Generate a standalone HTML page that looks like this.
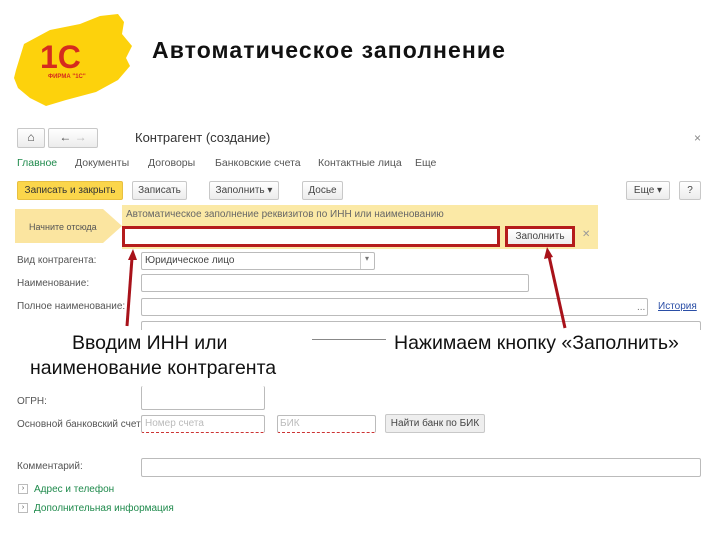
<!DOCTYPE html>
<html><head><meta charset="utf-8"><style>
*{margin:0;padding:0;box-sizing:border-box}
body{width:720px;height:540px;background:#fff;position:relative;overflow:hidden;font-family:"Liberation Sans",sans-serif;color:#444}
.a{position:absolute;white-space:nowrap}
.s{font-size:10px;color:#555}
.inp{position:absolute;border:1px solid #bbb;background:#fff;border-radius:2px}
.btn{position:absolute;border:1px solid #c8c8c8;border-radius:2px;background:linear-gradient(#fff,#ececec);font-size:10px;color:#444;text-align:center;line-height:17px}
.tab{position:absolute;top:157px;font-size:10.5px;color:#555}
.big{font-size:19.5px;color:#111}
</style></head><body>
<svg class="a" style="left:0;top:0" width="150" height="115">
<path d="M16 70 L24 44 L50 30 L80 24 L100 16 L118 14 L124 22 L122 34 L132 46 L126 58 L130 66 L118 80 L96 92 L66 100 L46 106 L30 98 L18 88 L14 78 Z" fill="#fdd20c"/>
<text x="40" y="68" font-family="Liberation Sans" font-weight="bold" font-size="32" fill="#d52b1e">1С</text>
<text x="48" y="78" font-family="Liberation Sans" font-weight="bold" font-size="6" fill="#d52b1e">ФИРМА "1С"</text>
</svg>
<div class="a" style="left:152px;top:37px;font-size:23px;font-weight:bold;color:#111;letter-spacing:1.1px">Автоматическое заполнение</div>

<div class="btn" style="left:17px;top:128px;width:28px;height:20px;font-size:12px">⌂</div>
<div class="btn" style="left:48px;top:128px;width:50px;height:20px;font-size:12px">← <span style="color:#bbb">→</span></div>
<div class="a" style="left:135px;top:130px;font-size:13px;color:#333">Контрагент (создание)</div>
<div class="a" style="left:694px;top:131px;font-size:12px;color:#888">×</div>

<div class="tab" style="left:17px;color:#1f8a4c">Главное</div>
<div class="tab" style="left:75px">Документы</div>
<div class="tab" style="left:148px">Договоры</div>
<div class="tab" style="left:215px">Банковские счета</div>
<div class="tab" style="left:318px">Контактные лица</div>
<div class="tab" style="left:415px">Еще</div>

<div class="btn" style="left:17px;top:181px;width:106px;height:19px;background:#fbd64b;border-color:#e8c040;color:#333">Записать и закрыть</div>
<div class="btn" style="left:132px;top:181px;width:55px;height:19px">Записать</div>
<div class="btn" style="left:209px;top:181px;width:70px;height:19px">Заполнить ▾</div>
<div class="btn" style="left:302px;top:181px;width:41px;height:19px">Досье</div>
<div class="btn" style="left:626px;top:181px;width:44px;height:19px">Еще ▾</div>
<div class="btn" style="left:679px;top:181px;width:22px;height:19px">?</div>

<div class="a" style="left:122px;top:205px;width:476px;height:44px;background:#fbe9a6"></div>
<div class="a s" style="left:126px;top:209px;color:#666">Автоматическое заполнение реквизитов по ИНН или наименованию</div>
<svg class="a" style="left:15px;top:209px" width="108" height="35"><path d="M0 0 H88 L107 17 L88 34 H0 Z" fill="#fbe5a0"/><text x="14" y="21" font-size="9" font-family="Liberation Sans" fill="#555">Начните отсюда</text></svg>
<div class="a" style="left:122px;top:226px;width:378px;height:21px;border:3px solid #b51c1c;background:#fff"></div>
<div class="a" style="left:505px;top:226px;width:70px;height:21px;border:3px solid #b51c1c;background:linear-gradient(#fff,#eee);font-size:10px;text-align:center;line-height:15px;color:#444">Заполнить</div>
<div class="a" style="left:582px;top:229px;font-size:10px;color:#999">✕</div>

<div class="a s" style="left:17px;top:255px">Вид контрагента:</div>
<div class="inp" style="left:141px;top:252px;width:234px;height:18px"></div>
<div class="a" style="left:360px;top:253px;width:1px;height:16px;background:#ccc"></div>
<div class="a s" style="left:145px;top:255px;color:#444">Юридическое лицо</div>
<div class="a" style="left:365px;top:254px;font-size:8px;color:#777">▾</div>
<div class="a s" style="left:17px;top:278px">Наименование:</div>
<div class="inp" style="left:141px;top:274px;width:388px;height:18px"></div>
<div class="a s" style="left:17px;top:301px">Полное наименование:</div>
<div class="inp" style="left:141px;top:298px;width:507px;height:18px"></div>
<div class="a s" style="left:637px;top:302px;color:#777">...</div>
<div class="a s" style="left:658px;top:301px;color:#2a4ea6;text-decoration:underline">История</div>
<div class="inp" style="left:141px;top:321px;width:560px;height:18px"></div>
<div class="a" style="left:0;top:330px;width:720px;height:58px;background:#fff"></div>
<div class="a" style="left:312px;top:339px;width:74px;height:1px;background:#888"></div>
<div class="a big" style="left:72px;top:332px">Вводим ИНН или</div>
<div class="a big" style="left:30px;top:357px">наименование контрагента</div>
<div class="a big" style="left:394px;top:332px">Нажимаем кнопку «Заполнить»</div>

<div class="inp" style="left:141px;top:386px;width:124px;height:24px;border-top:none"></div>
<div class="a s" style="left:17px;top:396px">ОГРН:</div>
<div class="a s" style="left:17px;top:419px">Основной банковский счет:</div>
<div class="inp" style="left:141px;top:415px;width:124px;height:18px;border-bottom:1px dashed #c33"></div>
<div class="a s" style="left:145px;top:418px;color:#bbb">Номер счета</div>
<div class="inp" style="left:277px;top:415px;width:99px;height:18px;border-bottom:1px dashed #c33"></div>
<div class="a s" style="left:280px;top:418px;color:#bbb">БИК</div>
<div class="btn" style="left:385px;top:414px;width:100px;height:19px;background:#eee">Найти банк по БИК</div>
<div class="a s" style="left:17px;top:461px">Комментарий:</div>
<div class="inp" style="left:141px;top:458px;width:560px;height:19px"></div>
<div class="a" style="left:18px;top:484px;width:10px;height:10px;border:1px solid #bbb;font-size:7px;line-height:8px;text-align:center">›</div>
<div class="a s" style="left:34px;top:484px;color:#1f8a4c">Адрес и телефон</div>
<div class="a" style="left:18px;top:503px;width:10px;height:10px;border:1px solid #bbb;font-size:7px;line-height:8px;text-align:center">›</div>
<div class="a s" style="left:34px;top:503px;color:#1f8a4c">Дополнительная информация</div>

<svg class="a" style="left:0;top:0" width="720" height="540">
<line x1="127" y1="326" x2="132" y2="258" stroke="#a8121a" stroke-width="3"/>
<path d="M133 249 L128 260 L137 260 Z" fill="#a8121a"/>
<line x1="565" y1="328" x2="549" y2="256" stroke="#a8121a" stroke-width="3"/>
<path d="M547 247 L544 259 L553 257 Z" fill="#a8121a"/>
</svg>
</body></html>
